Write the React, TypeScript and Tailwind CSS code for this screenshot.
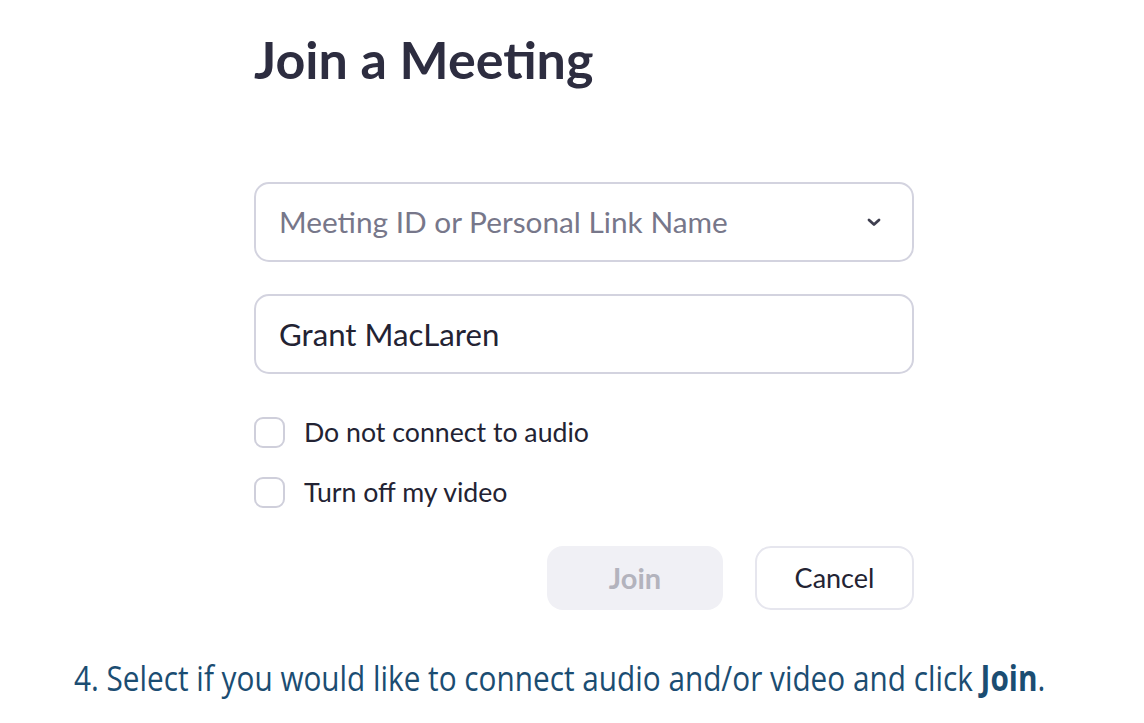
import React from "react";

function Checkbox({ label }: { label: string }) {
  return (
    <div className="flex items-center h-[31px]">
      <div className="w-[31px] h-[31px] rounded-[9px] border-2 border-[#cfcfdb] bg-white" />
      <span className="ml-[19px] text-[26.7px] text-[#232333] leading-none">{label}</span>
    </div>
  );
}

export default function App() {
  return (
    <div className="w-[1144px] h-[723px] bg-white overflow-hidden" style={{ fontFamily: "Lato, 'Open Sans', sans-serif" }}>
      <div className="ml-[254px] w-[660px] flex flex-col">
        <h1 className="mt-[31px] text-[52px] font-bold leading-[56px] text-[#2d2d40]">Join a Meeting</h1>
        <div className="mt-[95px] h-[80px] rounded-[15px] border-2 border-[#d3d3df] flex items-center justify-between pl-[23px] pr-[31px]">
          <span className="text-[29.8px] text-[#77778a]">Meeting ID or Personal Link Name</span>
          <svg width="14" height="9" viewBox="0 0 14 9" className="mt-[1px]">
            <path d="M2 2 L7 6.5 L12 2" fill="none" stroke="#3f3f4f" strokeWidth="2.8" strokeLinecap="round" strokeLinejoin="round" />
          </svg>
        </div>
        <div className="mt-[32px] h-[80px] rounded-[15px] border-2 border-[#d3d3df] flex items-center pl-[23px]">
          <span className="text-[31.2px] text-[#232333]">Grant MacLaren</span>
        </div>
        <div className="mt-[43px] flex flex-col gap-[29px]">
          <Checkbox label="Do not connect to audio" />
          <Checkbox label="Turn off my video" />
        </div>
        <div className="mt-[38px] flex justify-end gap-[32px]">
          <button className="w-[176px] h-[64px] rounded-[16px] bg-[#f0f0f5] text-[29px] font-bold text-[#b3b3bd]">Join</button>
          <button className="w-[159px] h-[64px] rounded-[16px] border-2 border-[#e6e6ee] bg-white text-[27px] text-[#232333]">Cancel</button>
        </div>
      </div>
      <p
        className="mt-[50px] ml-[74px] text-[35px] leading-none text-[#1b4d72] whitespace-nowrap origin-left scale-x-[0.85]"
        style={{ fontFamily: "'Open Sans', sans-serif" }}
      >
        4. Select if you would like to connect audio and/or video and click <b className="font-bold">Join</b>.
      </p>
    </div>
  );
}
